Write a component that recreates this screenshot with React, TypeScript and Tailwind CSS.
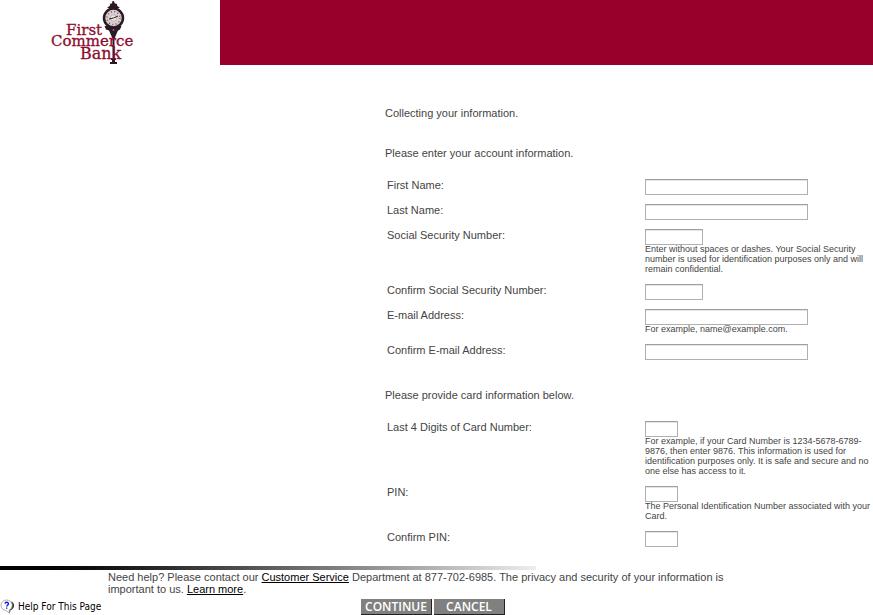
import React from 'react';

type Field = {
  id: string;
  label: string;
  width: string;
  type?: string;
  maxLength?: number;
  hint?: string;
};

const ACCOUNT_FIELDS: Field[] = [
  { id: 'firstName', label: 'First Name:', width: 'w-[163px]' },
  { id: 'lastName', label: 'Last Name:', width: 'w-[163px]' },
  {
    id: 'ssn',
    label: 'Social Security Number:',
    width: 'w-[58px]',
    type: 'password',
    maxLength: 9,
    hint: 'Enter without spaces or dashes. Your Social Security number is used for identification purposes only and will remain confidential.',
  },
  { id: 'ssnConfirm', label: 'Confirm Social Security Number:', width: 'w-[58px]', type: 'password', maxLength: 9 },
  { id: 'email', label: 'E-mail Address:', width: 'w-[163px]', type: 'email', hint: 'For example, name@example.com.' },
  { id: 'emailConfirm', label: 'Confirm E-mail Address:', width: 'w-[163px]', type: 'email' },
];

const CARD_FIELDS: Field[] = [
  {
    id: 'cardDigits',
    label: 'Last 4 Digits of Card Number:',
    width: 'w-[33px]',
    maxLength: 4,
    hint: 'For example, if your Card Number is 1234-5678-6789-9876, then enter 9876. This information is used for identification purposes only. It is safe and secure and no one else has access to it.',
  },
  {
    id: 'pin',
    label: 'PIN:',
    width: 'w-[33px]',
    type: 'password',
    maxLength: 4,
    hint: 'The Personal Identification Number associated with your Card.',
  },
  { id: 'pinConfirm', label: 'Confirm PIN:', width: 'w-[33px]', type: 'password', maxLength: 4 },
];

// Bank name with the street clock standing behind it
function Logo() {
  return (
    <svg width="90" height="65" viewBox="0 0 90 65" role="img" aria-label="First Commerce Bank">
      <g fill="#2b1a26">
        <path d="M61.500 1h1.500l.6 2.200 2.400.8v1.500l3 2.500H56l3-2.500V4l2-.8z" />
        <path d="M53.500 26h17l-1.500 3.500-2 1-3.500 8h-2l-3.500-8-3-1z" />
        <path d="M61.500 36h2v24h-2z" />
        <path d="M60 58h5v2h-5zM59 62h7v2h-7zM61 60h3v2h-3z" />
      </g>
      <circle cx="62.500" cy="18" r="9.500" fill="#d9cfd2" stroke="#2b1a26" strokeWidth="2.500" />
      <circle cx="62.500" cy="18" r="6.500" fill="none" stroke="#6b5560" strokeWidth="1.500" strokeDasharray="1 2.400" />
      <circle cx="62.500" cy="18" r="3.200" fill="#f2e6da" stroke="#a9979b" strokeWidth=".6" />
      <path d="M58 19l4.500-1 4.500-2" fill="none" stroke="#2b1a26" strokeWidth="1" />
      <circle cx="62.500" cy="30" r="1" fill="#9b5a70" />
      <g fill="#8c0d30" stroke="#8c0d30" strokeWidth=".3" fontFamily='"DejaVu Serif", serif'>
        <text x="15" y="35" fontSize="15">First</text>
        <text x="0" y="46" fontSize="15">Commerce</text>
        <text x="29" y="59" fontSize="16">Bank</text>
      </g>
    </svg>
  );
}

function HelpIcon() {
  return (
    <svg width="15" height="15" viewBox="0 0 15 15" aria-hidden="true">
      <path d="M11 2.500c3.500 1 4.300 5.500 1 8l-1.500.8-.8 3.200-2.700-3z" fill="#333" />
      <path d="M6.500 1C3.500 1 1 3.200 1 6.200s2 4.800 4.500 5.200L9.500 14l-.3-3c1.800-.8 3-2.500 3-4.800C12.200 3.200 9.500 1 6.500 1z" fill="#fff" stroke="#999" strokeWidth=".8" />
      <path d="M5 4.800c.2-2.200 3.600-2 3.400.1C8.300 6.200 6.700 6.200 6.700 7.500" fill="none" stroke="#1414e6" strokeWidth="1.400" />
      <path d="M6 8.500h1.400v1.300H6z" fill="#1414e6" />
    </svg>
  );
}

function FieldRow({ field }: { field: Field }) {
  return (
    <div className="flex items-start">
      <label htmlFor={field.id} className="w-[260px] shrink-0 pl-0.5 leading-3">
        {field.label}
      </label>
      <div className="min-w-0 flex-1">
        <input
          id={field.id}
          name={field.id}
          type={field.type ?? 'text'}
          maxLength={field.maxLength}
          aria-describedby={field.hint ? `${field.id}-hint` : undefined}
          className={`block h-4 border border-[#b0b0b0] border-t-[#a0a0a0] bg-white px-0.5 shadow-[inset_0_1px_0_#e4e4e4] ${field.width}`}
        />
        {field.hint && (
          <p id={`${field.id}-hint`} className="-mt-px mb-px max-w-[228px] text-[9px] leading-[10px]">
            {field.hint}
          </p>
        )}
      </div>
    </div>
  );
}

function ActionButton({ type, children }: { type: 'submit' | 'button'; children: React.ReactNode }) {
  return (
    <button
      type={type}
      form="enrollment"
      className="h-4 w-[71px] border-r border-b border-[#222] bg-[#808080] font-['Open_Sans',sans-serif] text-xs leading-[15px] font-semibold text-white"
    >
      {children}
    </button>
  );
}

export default function App() {
  return (
    <div className="bg-white font-['Liberation_Sans',Arial,sans-serif] text-[11px] leading-3 text-[#444]">
      <header className="flex h-[65px]">
        <div className="w-[220px] shrink-0 pl-[51px]">
          <Logo />
        </div>
        <div className="flex-1 bg-[#990029]" />
      </header>

      <main className="pt-[42px] pl-[385px]">
        <h1>Collecting your information.</h1>
        <form id="enrollment" onSubmit={(e) => e.preventDefault()}>
          <h2 className="mt-7">Please enter your account information.</h2>
          <div className="mt-5 flex flex-col gap-[9px]">
            {ACCOUNT_FIELDS.map((field) => (
              <FieldRow key={field.id} field={field} />
            ))}
          </div>

          <h2 className="mt-[29px]">Please provide card information below.</h2>
          <div className="mt-5 flex flex-col gap-[9px]">
            {CARD_FIELDS.map((field) => (
              <FieldRow key={field.id} field={field} />
            ))}
          </div>
        </form>
      </main>

      <footer className="mt-[19px]">
        <div className="h-1 w-[536px] bg-linear-to-r from-black to-[#eee]" />
        <p className="mt-px max-w-[740px] pl-[108px]">
          Need help? Please contact our{' '}
          <a href="#customer-service" className="text-black underline">Customer Service</a> Department at 877-702-6985. The
          privacy and security of your information is important to us.{' '}
          <a href="#learn-more" className="text-black underline">Learn more</a>.
        </p>
        <div className="mt-1 flex items-start">
          <div className="w-[361px] shrink-0">
            <a
              href="#help"
              className="inline-flex items-center gap-[3px] font-['DejaVu_Sans_Condensed','DejaVu_Sans',sans-serif] text-[10px] text-black"
            >
              <HelpIcon />
              Help For This Page
            </a>
          </div>
          <div className="flex gap-0.5">
            <ActionButton type="submit">CONTINUE</ActionButton>
            <ActionButton type="button">CANCEL</ActionButton>
          </div>
        </div>
      </footer>
    </div>
  );
}
